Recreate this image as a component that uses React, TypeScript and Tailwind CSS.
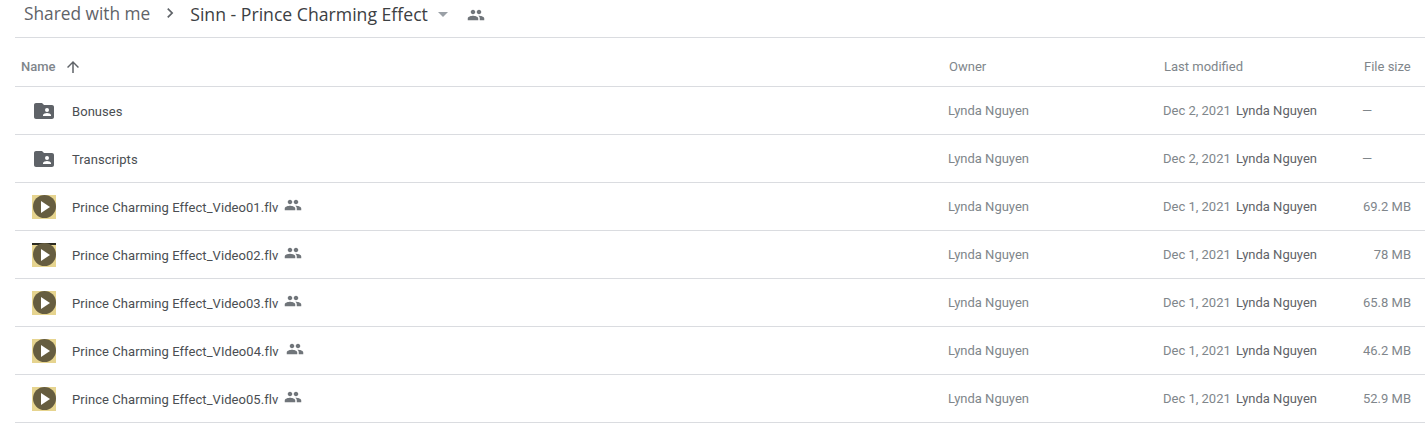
const PeopleIcon = ({ className }: { className: string }) => (
  <svg className={className} viewBox="0 0 24 24" fill="currentColor">
    <path d="M16 11c1.66 0 2.99-1.34 2.99-3S17.66 5 16 5s-3 1.34-3 3 1.34 3 3 3zm-8 0c1.66 0 2.99-1.34 2.99-3S9.66 5 8 5 5 6.34 5 8s1.34 3 3 3zm0 2c-2.33 0-7 1.17-7 3.5V19h14v-2.5C15 14.17 10.33 13 8 13zm8 0c-.29 0-.62.02-.97.05 1.16.84 1.97 1.97 1.97 3.45V19h6v-2.5c0-2.33-4.67-3.5-7-3.5z" />
  </svg>
);

const SharedFolder = () => (
  <svg className="w-6 h-6 text-[#5f6368]" viewBox="0 0 24 24" fill="currentColor">
    <path d="M4 4h6l2 2h8c1.1 0 2 .9 2 2v10c0 1.1-.9 2-2 2H4c-1.1 0-2-.9-2-2V6c0-1.1.9-2 2-2z" />
    <circle cx="15" cy="11" r="2" fill="#fff" />
    <path d="M11 17v-1c0-1.3 2.7-2 4-2s4 .7 4 2v1z" fill="#fff" />
  </svg>
);

const VideoThumb = ({ bar }: { bar?: boolean }) => (
  <div className="relative w-6 h-6 bg-[#e6d48f] flex items-center justify-center overflow-hidden">
    {bar && <div className="absolute top-0 left-0 right-0 h-[2px] bg-[#2b2a20]" />}
    <div className="relative w-[23px] h-[23px] rounded-full bg-[#665d40] flex items-center justify-center">
      <svg className="w-[9px] h-[12px] ml-[2px]" viewBox="0 0 9 12" fill="#fff">
        <path d="M0 0 L9 6 L0 12 Z" />
      </svg>
    </div>
  </div>
);

type Row = {
  name: string;
  date: string;
  size: string;
  folder?: boolean;
  bar?: boolean;
  iconGap?: string;
};

const rows: Row[] = [
  { name: "Bonuses", date: "Dec 2, 2021", size: "—", folder: true },
  { name: "Transcripts", date: "Dec 2, 2021", size: "—", folder: true },
  { name: "Prince Charming Effect_Video01.flv", date: "Dec 1, 2021", size: "69.2 MB" },
  { name: "Prince Charming Effect_Video02.flv", date: "Dec 1, 2021", size: "78 MB", bar: true },
  { name: "Prince Charming Effect_Video03.flv", date: "Dec 1, 2021", size: "65.8 MB" },
  { name: "Prince Charming Effect_VIdeo04.flv", date: "Dec 1, 2021", size: "46.2 MB", iconGap: "ml-[7px]" },
  { name: "Prince Charming Effect_Video05.flv", date: "Dec 1, 2021", size: "52.9 MB" },
];

export default function App() {
  return (
    <div className="w-[1425px] h-[428px] overflow-hidden bg-white font-['Roboto',sans-serif]">
      <div className="h-[37px] flex items-center pl-6 pb-[9px] font-['Open_Sans',sans-serif] text-[17.65px] text-[#3c4043]">
        <span className="text-[#5f6368] text-[17.3px]">Shared with me</span>
        <svg className="w-5 h-5 ml-[10px] mr-[10px] -mt-[2px] text-[#5f6368]" viewBox="0 0 24 24" fill="currentColor">
          <path d="M8.6 16.6 13.2 12 8.6 7.4 10 6l6 6-6 6z" />
        </svg>
        <span>Sinn - Prince Charming Effect</span>
        <svg className="w-[10px] h-[5px] ml-[10px] text-[#9aa0a6]" viewBox="0 0 10 5" fill="currentColor">
          <path d="M0 0h10L5 5z" />
        </svg>
        <PeopleIcon className="w-[18px] h-[18px] ml-[19px] mt-[2px] text-[#70757a]" />
      </div>
      <div className="ml-[15px] border-t border-[#dadce0]">
        <div className="h-[49px] pt-[10px] flex items-center border-b border-[#dadce0] text-[13px] font-medium text-[#80868b]">
          <div className="w-[934px] flex items-center pl-[6px]">
            <span>Name</span>
            <svg className="w-[18px] h-[18px] ml-[8px] text-[#5f6368]" viewBox="0 0 24 24" fill="currentColor">
              <path d="M4 12l1.41 1.41L11 7.83V20h2V7.83l5.58 5.59L20 12l-8-8-8 8z" />
            </svg>
          </div>
          <div className="w-[215px] font-normal">Owner</div>
          <div className="w-[200px] font-normal">Last modified</div>
          <div className="font-normal">File size</div>
        </div>
        {rows.map((r) => (
          <div key={r.name} className="h-[48px] flex items-center border-b border-[#dadce0] text-[13px]">
            <div className="w-[933px] flex items-center pl-[17px]">
              <div className="w-6 h-6 flex items-center justify-center">
                {r.folder ? <SharedFolder /> : <VideoThumb bar={r.bar} />}
              </div>
              <span className="ml-4 pt-[2px] text-[#4a4e52] tracking-[0.06px]">{r.name}</span>
              {!r.folder && (
                <PeopleIcon className={`w-[18px] h-[18px] ${r.iconGap ?? "ml-[6px]"} -mt-[3px] text-[#70757a]`} />
              )}
            </div>
            <div className="w-[215px] text-[#80868b]">Lynda Nguyen</div>
            <div className="w-[190px] flex">
              <span className="w-[73px] text-[#80868b]">{r.date}</span>
              <span className="text-[#5f6368]">Lynda Nguyen</span>
            </div>
            <div className="w-[58px] text-right text-[#80868b]">
              {r.folder ? <span className="inline-block w-[49px] text-left">—</span> : r.size}
            </div>
          </div>
        ))}
      </div>
    </div>
  );
}
